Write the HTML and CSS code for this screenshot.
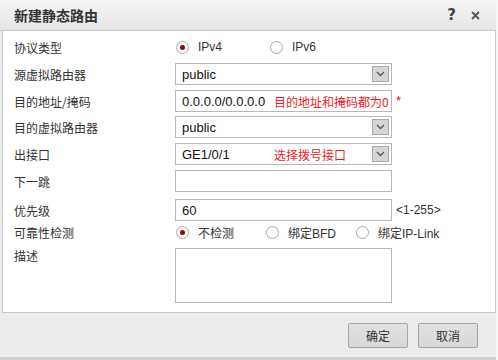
FILE: index.html
```html
<!DOCTYPE html>
<html lang="zh-CN">
<head>
<meta charset="utf-8">
<title>新建静态路由</title>
<link rel="stylesheet" href="styles.css">
</head>
<body>
<div class="dialog">
  <div class="titlebar">
    <span class="title">新建静态路由</span>
    <span class="tools">
      <span class="help">?</span>
      <svg class="close" width="9" height="9" viewBox="0 0 9 9"><path d="M1 1 L8 8 M8 1 L1 8" stroke="#555" stroke-width="1.8" fill="none"/></svg>
    </span>
  </div>
  <div class="content">
    <div class="row r1">
      <span class="label">协议类型</span>
      <div class="radios">
        <span class="radio w94"><i class="dot on"></i>IPv4</span>
        <span class="radio w94"><i class="dot"></i>IPv6</span>
      </div>
    </div>
    <div class="row">
      <span class="label">源虚拟路由器</span>
      <div class="field select">public<span class="arrow"><svg width="9" height="6" viewBox="0 0 9 6"><path d="M1 1 L4.5 4.5 L8 1" stroke="#555" stroke-width="1.3" fill="none"/></svg></span></div>
    </div>
    <div class="row">
      <span class="label">目的地址/掩码</span>
      <div class="field">0.0.0.0/0.0.0.0<span class="hint">目的地址和掩码都为0</span></div>
      <span class="req">*</span>
    </div>
    <div class="row r4">
      <span class="label">目的虚拟路由器</span>
      <div class="field select">public<span class="arrow"><svg width="9" height="6" viewBox="0 0 9 6"><path d="M1 1 L4.5 4.5 L8 1" stroke="#555" stroke-width="1.3" fill="none"/></svg></span></div>
    </div>
    <div class="row">
      <span class="label">出接口</span>
      <div class="field select">GE1/0/1<span class="hint">选择拨号接口</span><span class="arrow"><svg width="9" height="6" viewBox="0 0 9 6"><path d="M1 1 L4.5 4.5 L8 1" stroke="#555" stroke-width="1.3" fill="none"/></svg></span></div>
    </div>
    <div class="row">
      <span class="label">下一跳</span>
      <div class="field"></div>
    </div>
    <div class="row r7">
      <span class="label">优先级</span>
      <div class="field">60</div>
      <span class="range">&lt;1-255&gt;</span>
    </div>
    <div class="row r8">
      <span class="label">可靠性检测</span>
      <div class="radios">
        <span class="radio w90"><i class="dot on"></i>不检测</span>
        <span class="radio w90"><i class="dot"></i>绑定BFD</span>
        <span class="radio"><i class="dot"></i>绑定IP-Link</span>
      </div>
    </div>
    <div class="row r9">
      <span class="label top">描述</span>
      <div class="field area"></div>
    </div>
  </div>
  <div class="footer">
    <button class="btn">确定</button>
    <button class="btn">取消</button>
  </div>
</div>
</body>
</html>
```

FILE: styles.css
```css
html, body {
  margin: 0;
  padding: 0;
  background: #f6f6f6;
}
body {
  font-family: "Liberation Sans", "Noto Sans CJK SC", Arial, sans-serif;
  font-size: 12px;
  color: #333;
  width: 498px;
  height: 360px;
  overflow: hidden;
}
.dialog {
  width: 496px;
  height: 357px;
  background: #ececec;
  border-bottom: 3px solid #cfcfcf;
  display: flex;
  flex-direction: column;
}
.titlebar {
  height: 31px;
  flex: none;
  box-sizing: border-box;
  border-bottom: 1px solid #c9c9c9;
  background: linear-gradient(#f4f4f4, #e6e6e6);
  display: flex;
  align-items: center;
  justify-content: space-between;
  padding: 0 16px 0 14px;
}
.title {
  font-weight: bold;
  font-size: 14px;
  color: #333;
  font-family: "Noto Sans CJK SC", sans-serif;
}
.tools {
  display: flex;
  align-items: center;
  gap: 15px;
}
.help {
  font-weight: bold;
  font-size: 15px;
  color: #444;
  font-family: "DejaVu Sans", sans-serif;
}
.close { margin-top: 1px; }
.content {
  height: 282px;
  flex: none;
  margin: 0 0 0 2px;
  box-sizing: border-box;
  border: 1px solid #c6c6c6;
  border-top: none;
  background: #fff;
  padding: 4px 0 0 11px;
}
.row {
  display: flex;
  align-items: center;
  height: 22px;
  margin-top: 5px;
  position: relative;
}
.r1 { margin-top: 1px; }
.r4 { margin-top: 4px; }
.r7 { margin-top: 7px; }
.r8 { margin-top: 0; }
.r9 { margin-top: 5px; height: 55px; align-items: flex-start; }
.label {
  width: 161px;
  flex: none;
  font-family: "Noto Sans CJK SC", sans-serif;
  font-size: 12px;
  color: #333;
}
.label.top { margin-top: -1px; }
.radios {
  display: flex;
  align-items: center;
  padding-left: 1px;
}
.radio {
  display: flex;
  align-items: center;
  gap: 9px;
  font-size: 12px;
  white-space: nowrap;
}
.w94 { width: 94px; }
.w90 { width: 90px; }
.dot {
  width: 11px;
  height: 11px;
  border: 1px solid #a8a8a8;
  border-radius: 50%;
  background: #fff;
  position: relative;
  flex: none;
}
.dot.on::after {
  content: "";
  position: absolute;
  left: 3px;
  top: 3px;
  width: 5px;
  height: 5px;
  border-radius: 50%;
  background: #a00000;
}
.field {
  width: 217px;
  height: 22px;
  box-sizing: border-box;
  border: 1px solid #b8b8b8;
  background: #fff;
  padding-left: 6px;
  display: flex;
  align-items: center;
  position: relative;
  color: #111;
  font-size: 13px;
  flex: none;
}
.field.area {
  height: 55px;
}
.arrow {
  position: absolute;
  right: 2px;
  top: 2px;
  width: 17px;
  height: 16px;
  box-sizing: border-box;
  border: 1px solid #a9a9a9;
  background: #d6d6d6;
  display: flex;
  align-items: center;
  justify-content: center;
}
.hint {
  position: absolute;
  left: 98px;
  top: 2px;
  color: #ee1c25;
  font-family: "Noto Sans CJK SC", sans-serif;
  font-size: 12px;
  line-height: 17px;
  white-space: nowrap;
}
.req {
  color: #e02020;
  margin-left: 4px;
  margin-top: -2px;
  font-size: 13px;
}
.range {
  font-size: 12px;
  margin-left: 4px;
  color: #333;
}
.footer {
  flex: 1;
  display: flex;
  justify-content: flex-end;
  align-items: flex-start;
  padding: 10px 18px 0 0;
  gap: 10px;
}
.btn {
  width: 60px;
  height: 25px;
  border: 1px solid #a6a6a6;
  border-radius: 2px;
  background: linear-gradient(#e2e2e2, #d8d8d8);
  font-family: "Noto Sans CJK SC", sans-serif;
  font-size: 12px;
  color: #333;
  padding: 0;
}
```
